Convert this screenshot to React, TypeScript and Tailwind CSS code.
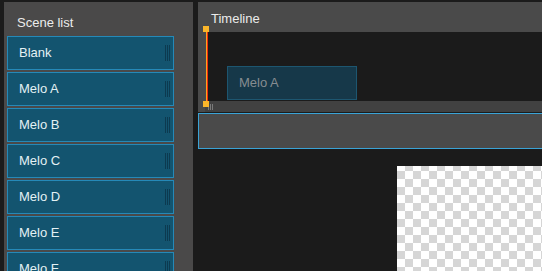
const scenes = ["Blank", "Melo A", "Melo B", "Melo C", "Melo D", "Melo E", "Melo F"];

function Grip() {
  return (
    <div className="flex h-[16px] gap-[1px]">
      <div className="w-[1px] bg-[#0c3a50]" />
      <div className="w-[1px] bg-[#0c3a50]" />
      <div className="w-[1px] bg-[#0c3a50]" />
    </div>
  );
}

export default function App() {
  return (
    <div className="flex h-[271px] w-[542px] overflow-hidden bg-[#1b1b1b] font-['Liberation_Sans',Arial,sans-serif] text-[13px]">
      {/* scene list */}
      <div className="ml-[4px] mt-[2px] flex w-[189px] shrink-0 flex-col bg-[#4a4949]">
        <div className="h-[34px] shrink-0 pl-[13px] pt-[13px] leading-[16px] text-[#ececec]">
          Scene list
        </div>
        <div className="flex flex-col gap-[2px] pl-[3px] pr-[19px]">
          {scenes.map((s) => (
            <div
              key={s}
              className="flex h-[34px] shrink-0 items-center justify-between border border-[#2589b8] bg-[#13546f] pl-[11px] pr-[3px] text-[#e4f1f4]"
            >
              <span>{s}</span>
              <Grip />
            </div>
          ))}
        </div>
      </div>

      {/* timeline */}
      <div className="ml-[5px] mt-[2px] flex min-w-0 flex-1 flex-col">
        <div className="flex h-[30px] shrink-0 items-center bg-[#4a4a4a] pl-[13px] pt-[4px] text-[#ececec]">
          Timeline
        </div>
        <div className="relative flex h-[69px] shrink-0 bg-[#4a4a4a]">
          <div className="ml-[8px] flex-1 bg-[#1b1b1b] pl-[21px] pt-[34px]">
            <div className="flex h-[34px] w-[130px] items-center border border-[#1d5670] bg-[#163849] pl-[11px] text-[#868d91]">
              Melo A
            </div>
          </div>
          {/* playhead */}
          <div className="absolute left-[5px] top-[-6px] h-[6px] w-[6px] bg-[#fbb62a]" />
          <div className="absolute left-[8px] top-0 flex h-[69px] w-[2px]">
            <div className="w-[1px] bg-[#ffa31c]" />
            <div className="w-[1px] bg-[#f02a10]" />
          </div>
          <div className="absolute left-[5px] top-[69px] z-10 h-[6px] w-[6px] bg-[#fbb62a]" />
        </div>
        <div className="flex h-[11px] shrink-0 bg-[#4a4a4a]">
          <div className="ml-[7px] flex flex-1 items-center gap-[1px] bg-[#414141] pl-[3px]">
            <div className="h-[6px] w-[1px] bg-[#7a7a7a]" />
            <div className="h-[6px] w-[1px] bg-[#7a7a7a]" />
            <div className="h-[6px] w-[1px] bg-[#7a7a7a]" />
          </div>
        </div>
        <div className="mt-[1px] h-[36px] shrink-0 border border-r-0 border-[#3aa3d6] bg-[#4a4a4a]" />
        <div className="flex-1 pl-[199px] pt-[17px]">
          <div className="h-full w-full bg-[conic-gradient(#d6d6d6_25%,#ffffff_0_50%,#d6d6d6_0_75%,#ffffff_0)] bg-[length:16px_16px] bg-[position:0px_-3px]" />
        </div>
      </div>
    </div>
  );
}
